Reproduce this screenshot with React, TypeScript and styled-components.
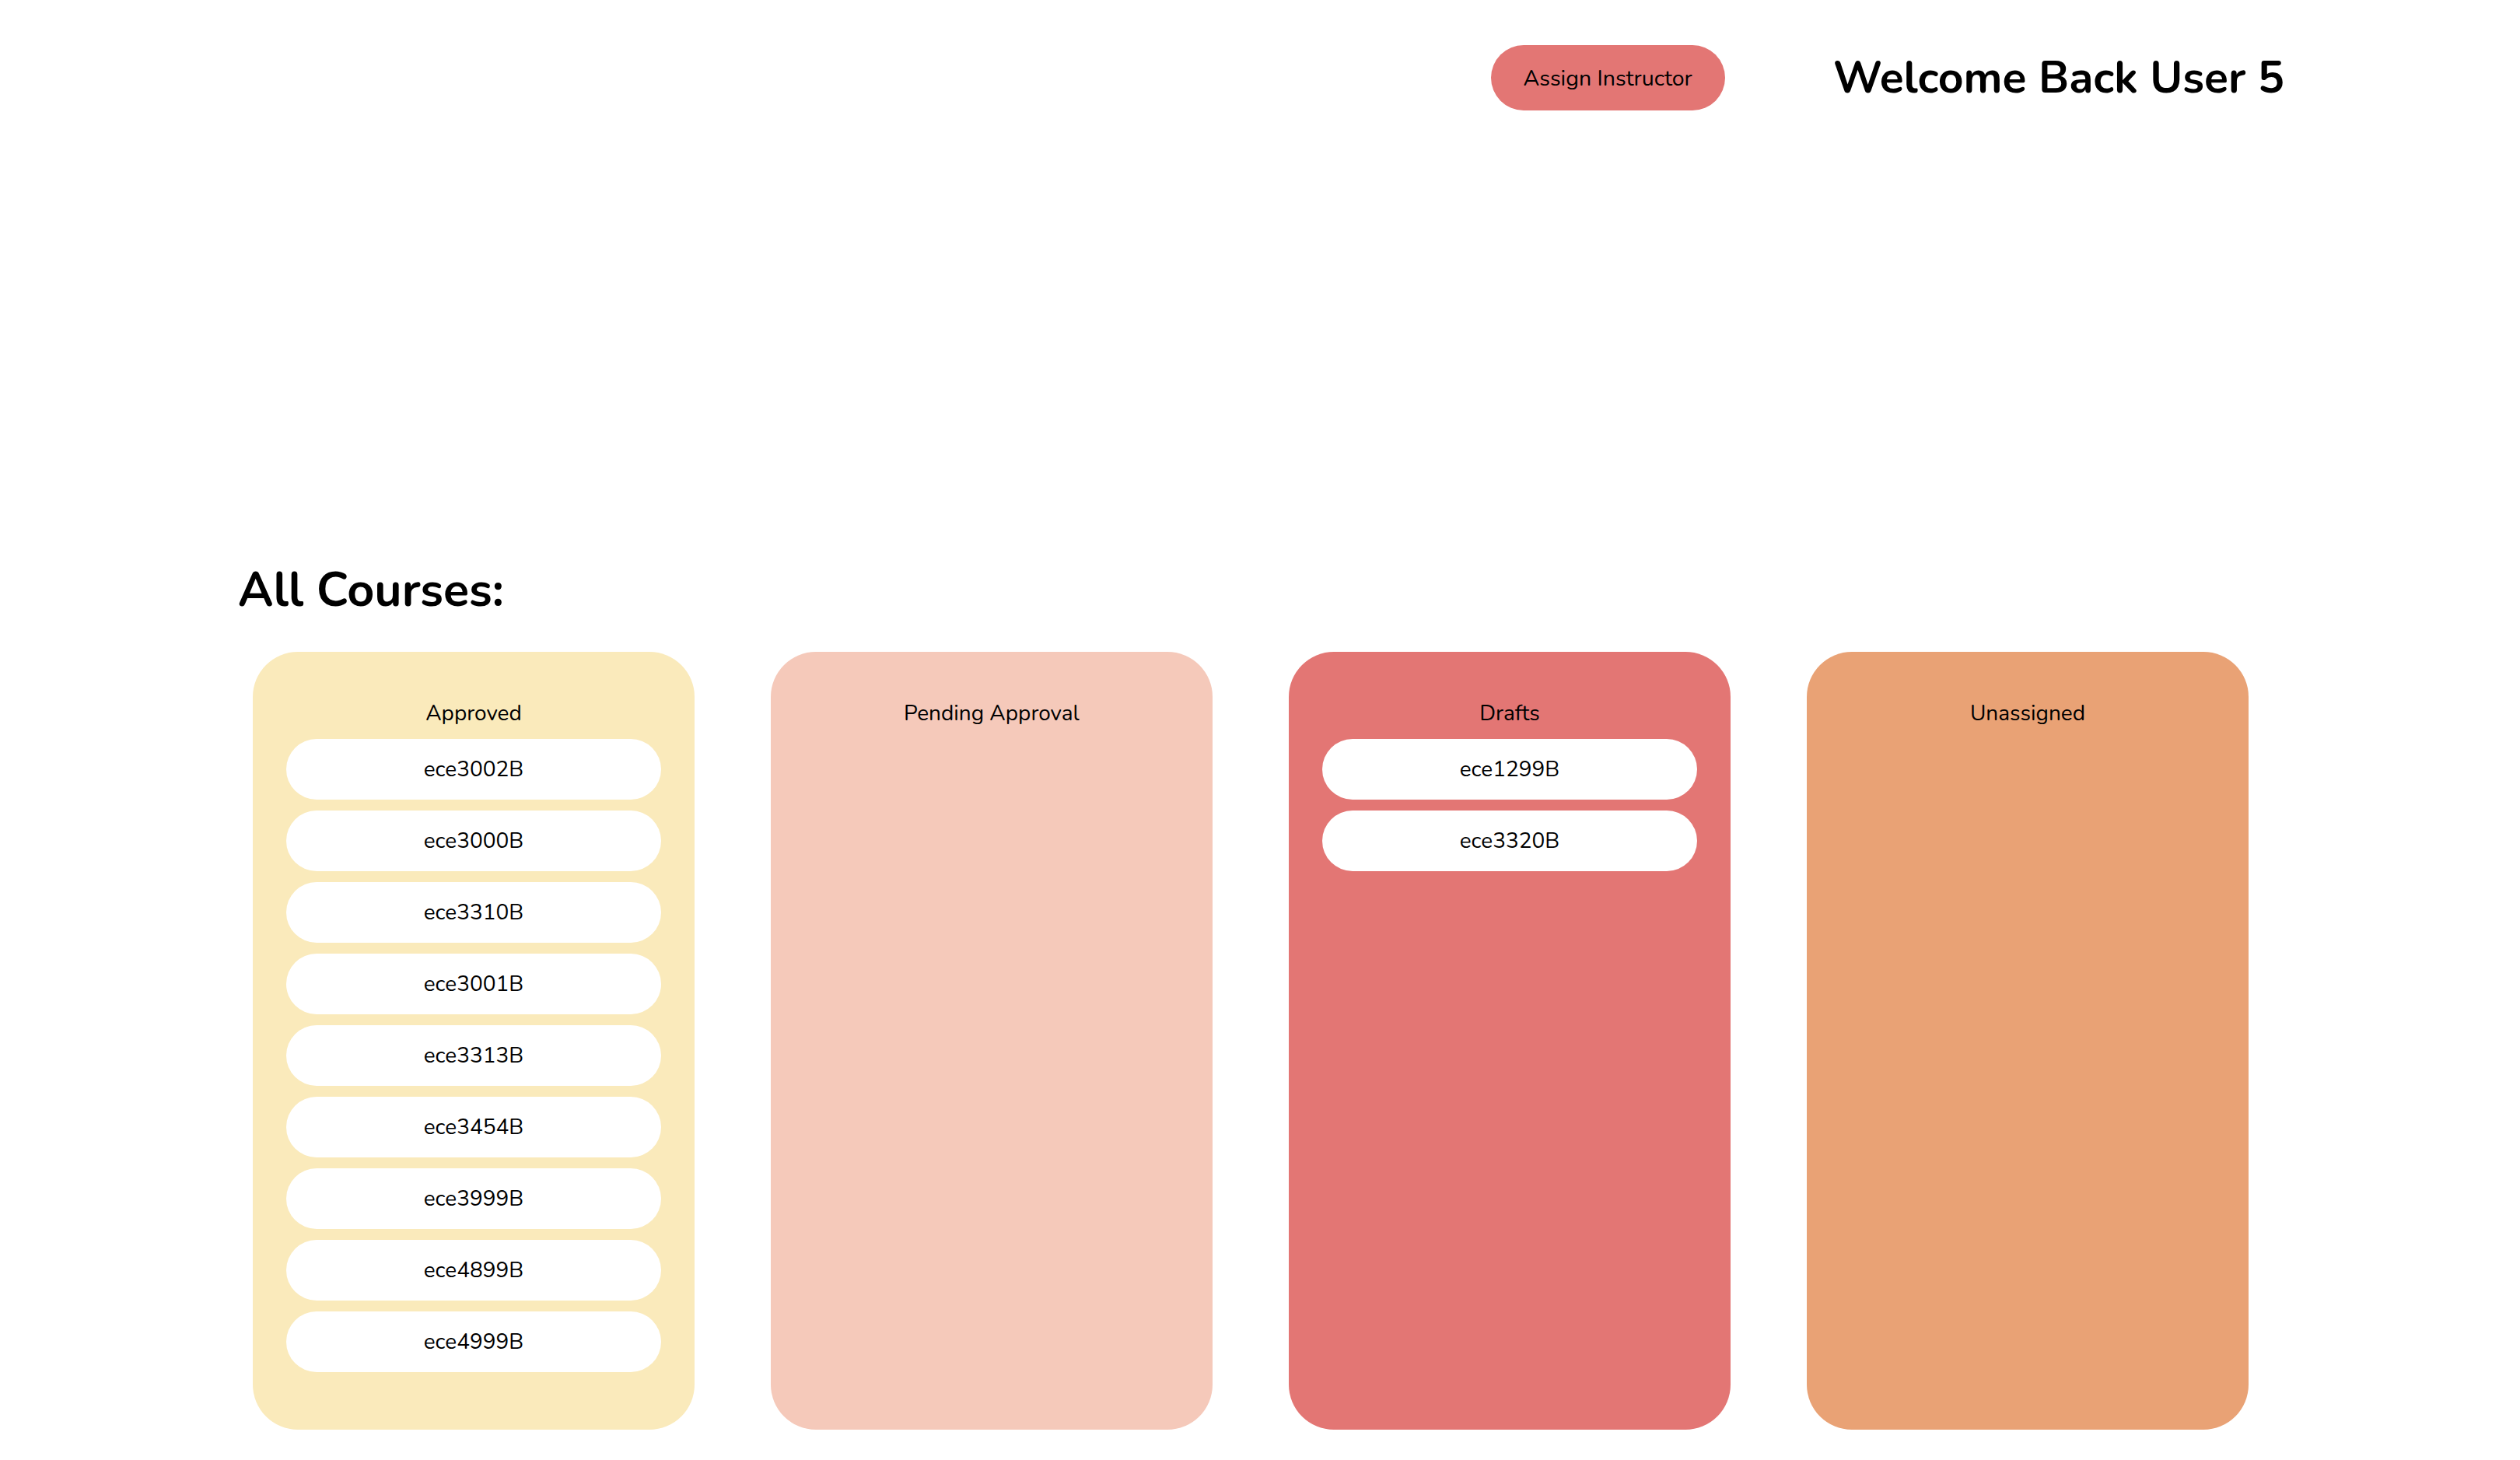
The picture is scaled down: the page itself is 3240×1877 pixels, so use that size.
import React from "react";
import styled, { createGlobalStyle } from "styled-components";

const GlobalStyle = createGlobalStyle`
  html, body {
    margin: 0;
    padding: 0;
    background: #ffffff;
    font-family: "Nunito", "Lato", "Noto Sans", sans-serif;
    color: #000000;
  }
  ::-webkit-scrollbar {
    width: 3px;
  }
  ::-webkit-scrollbar-track {
    background: #f0f0f0;
  }
  ::-webkit-scrollbar-button:single-button {
    display: block;
    height: 26px;
    background: #f0f0f0;
  }
  ::-webkit-scrollbar-thumb {
    background: linear-gradient(to right, transparent 60%, #a0a0a0 60%);
  }
`;

const Page = styled.div`
  min-height: 2672px;
  display: flex;
  flex-direction: column;
`;

const TopBar = styled.header`
  display: flex;
  justify-content: flex-end;
  align-items: center;
  gap: 139px;
  padding: 58px 303px 0 0;
`;

const AssignButton = styled.button`
  height: 84px;
  padding: 0 42px;
  border: none;
  border-radius: 42px;
  background: #e37674;
  color: #000000;
  font-family: inherit;
  font-size: 28.5px;
  cursor: pointer;
`;

const Welcome = styled.h1`
  margin: 0;
  font-size: 57px;
  font-weight: 700;
  line-height: 1;
`;

const Section = styled.section`
  display: flex;
  flex-direction: column;
  padding: 587px 0 0 306px;
`;

const SectionTitle = styled.h2`
  margin: 0 0 48px;
  font-size: 61px;
  font-weight: 700;
  line-height: 1;
`;

const Board = styled.div`
  display: grid;
  grid-template-columns: repeat(4, 568px);
  gap: 98px;
  margin-left: 19px;
`;

const Column = styled.div<{ $bg: string }>`
  height: 1000px;
  box-sizing: border-box;
  border-radius: 58px;
  background: ${(p) => p.$bg};
  padding: 60px 43px 0;
  display: flex;
  flex-direction: column;
  gap: 14px;
`;

const ColumnTitle = styled.div`
  text-align: center;
  font-size: 28px;
  line-height: 38px;
`;

const CourseList = styled.div`
  display: flex;
  flex-direction: column;
  gap: 14px;
`;

const CourseItem = styled.div`
  height: 78px;
  border-radius: 39px;
  background: #ffffff;
  display: flex;
  align-items: center;
  justify-content: center;
  font-size: 28px;
`;

const columns = [
  {
    title: "Approved",
    bg: "#faeabb",
    items: [
      "ece3002B",
      "ece3000B",
      "ece3310B",
      "ece3001B",
      "ece3313B",
      "ece3454B",
      "ece3999B",
      "ece4899B",
      "ece4999B",
    ],
  },
  { title: "Pending Approval", bg: "#f5c9ba", items: [] as string[] },
  { title: "Drafts", bg: "#e37674", items: ["ece1299B", "ece3320B"] },
  { title: "Unassigned", bg: "#e9a275", items: [] as string[] },
];

export default function App() {
  return (
    <Page>
      <GlobalStyle />
      <TopBar>
        <AssignButton>Assign Instructor</AssignButton>
        <Welcome>Welcome Back User 5</Welcome>
      </TopBar>
      <Section>
        <SectionTitle>All Courses:</SectionTitle>
        <Board>
          {columns.map((c) => (
            <Column key={c.title} $bg={c.bg}>
              <ColumnTitle>{c.title}</ColumnTitle>
              {c.items.length > 0 && (
                <CourseList>
                  {c.items.map((i) => (
                    <CourseItem key={i}>{i}</CourseItem>
                  ))}
                </CourseList>
              )}
            </Column>
          ))}
        </Board>
      </Section>
    </Page>
  );
}
